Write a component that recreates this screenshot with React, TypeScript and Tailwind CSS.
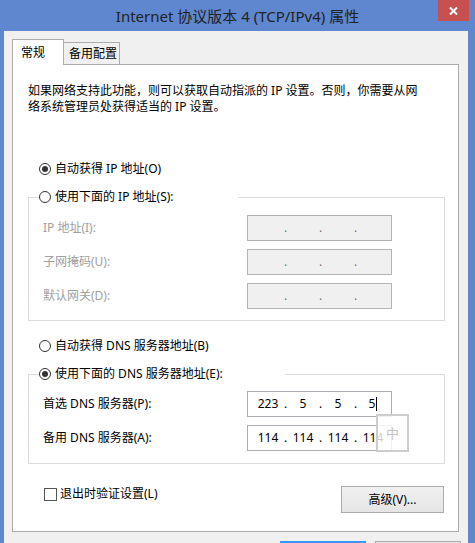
import { Fragment } from "react";

const FONT = "font-['Noto_Sans','Noto_Sans_CJK_SC',sans-serif]";

function Radio({ checked }: { checked?: boolean }) {
  return (
    <span className="flex h-[12px] w-[12px] shrink-0 items-center justify-center rounded-full border border-[#333] bg-white">
      {checked && <span className="h-[6px] w-[6px] rounded-full bg-[#333]" />}
    </span>
  );
}

function RadioRow({ label, checked }: { label: string; checked?: boolean }) {
  return (
    <div className="flex h-[16px] items-center gap-[4px] whitespace-nowrap">
      <Radio checked={checked} />
      <span>{label}</span>
    </div>
  );
}

function IpField({ values, disabled, caret }: { values: string[]; disabled?: boolean; caret?: boolean }) {
  return (
    <div
      className={
        "flex h-[26px] w-[145px] shrink-0 items-center border pl-[6px] " +
        (disabled ? "border-[#b4b4b4] bg-[#f0f0f0] text-[#777]" : "border-[#abadb3] bg-white text-black")
      }
    >
      {values.map((v, i) => (
        <Fragment key={i}>
          {i > 0 && <span className="w-[7px] text-center">.</span>}
          <span className="flex w-[28px] items-center justify-center">
            {v}
            {caret && i === 3 && <span className="ml-[1px] h-[14px] w-[1px] bg-black" />}
          </span>
        </Fragment>
      ))}
    </div>
  );
}

function FieldRow({ label, values, disabled, caret }: { label: string; values: string[]; disabled?: boolean; caret?: boolean }) {
  return (
    <div className="flex h-[26px] items-center">
      <span className={"w-[204px] whitespace-nowrap " + (disabled ? "text-[#a0a0a0]" : "text-black")}>{label}</span>
      <IpField values={values} disabled={disabled} caret={caret} />
    </div>
  );
}

const EMPTY = ["", "", "", ""];

export default function App() {
  return (
    <div className={`relative h-[543px] w-[475px] overflow-hidden bg-[#5e87d0] text-[12px] leading-[16px] text-black ${FONT}`}>
      {/* title bar */}
      <div className="relative flex h-[31px] items-center justify-center">
        <span className="text-[15px] text-[#222]">Internet 协议版本 4 (TCP/IPv4) 属性</span>
        <button className="absolute right-[6px] top-0 flex h-[21px] w-[31px] items-center justify-center bg-[#c75050]">
          <svg width="9" height="8" viewBox="0 0 9 8">
            <path d="M1 0.5 L8 7.5 M8 0.5 L1 7.5" stroke="white" strokeWidth="2" />
          </svg>
        </button>
      </div>

      {/* client area */}
      <div className="ml-[4px] mr-[7px] h-[512px] bg-[#f0f0f0] pl-[8px] pr-[9px] pt-[8px]">
        <div className="relative z-10 -mb-px flex h-[26px] items-end">
          <div className="h-[26px] w-[52px] border-l border-r border-t border-[#acacac] bg-white pl-[8px] pt-[5px]">常规</div>
          <div className="-ml-px h-[23px] w-[57px] border border-[#acacac] bg-[#f0f0f0] pl-[5px] pt-[3px]">备用配置</div>
        </div>

        <div className="h-[468px] border border-[#acacac] bg-white pl-[15px] pr-[13px] pt-[18px]">
          <p className="whitespace-nowrap leading-[16px]">
            如果网络支持此功能，则可以获取自动指派的 IP 设置。否则，你需要从网
            <br />
            络系统管理员处获得适当的 IP 设置。
          </p>

          <div className="ml-[11px] mt-[46px]">
            <RadioRow label="自动获得 IP 地址(O)" checked />
          </div>

          <fieldset className="mt-[12px] border border-[#dcdcdc] pb-[11px] pl-[14px]">
            <legend className="-ml-[4px] w-[199px] bg-white">
              <RadioRow label="使用下面的 IP 地址(S):" />
            </legend>
            <div className="mt-[10px] flex flex-col gap-[8px]">
              <FieldRow label="IP 地址(I):" values={EMPTY} disabled />
              <FieldRow label="子网掩码(U):" values={EMPTY} disabled />
              <FieldRow label="默认网关(D):" values={EMPTY} disabled />
            </div>
          </fieldset>

          <div className="ml-[11px] mt-[17px]">
            <RadioRow label="自动获得 DNS 服务器地址(B)" />
          </div>

          <fieldset className="mt-[12px] border border-[#dcdcdc] pb-[12px] pl-[14px]">
            <legend className="-ml-[4px] w-[246px] bg-white">
              <RadioRow label="使用下面的 DNS 服务器地址(E):" checked />
            </legend>
            <div className="mt-[9px] flex flex-col gap-[8px]">
              <FieldRow label="首选 DNS 服务器(P):" values={["223", "5", "5", "5"]} caret />
              <FieldRow label="备用 DNS 服务器(A):" values={["114", "114", "114", "114"]} />
            </div>
          </fieldset>

          <div className="mt-[22px] flex items-start justify-between">
            <label className="ml-[16px] flex h-[16px] items-center gap-[3px] whitespace-nowrap">
              <span className="h-[13px] w-[13px] border border-[#555] bg-white" />
              <span>退出时验证设置(L)</span>
            </label>
            <button className="mr-[1px] h-[27px] w-[103px] border border-[#acacac] bg-gradient-to-b from-[#f0f0f0] to-[#e5e5e5] text-black">
              高级(V)...
            </button>
          </div>
        </div>

        {/* OK / Cancel buttons, only their top edge is in view */}
        <div className="mt-[9px] flex gap-[9px] pl-[268px]">
          <div className="h-[27px] w-[86px] shrink-0 border-2 border-[#3399ff] bg-[#e5f1fb]" />
          <div className="h-[27px] w-[86px] shrink-0 border border-[#acacac] bg-[#e5e5e5]" />
        </div>
      </div>

      {/* IME indicator */}
      <div className="absolute left-[376px] top-[414px] flex h-[38px] w-[33px] items-center justify-center border-2 border-[#cdcdcd] bg-white/80 text-[13px] text-[#c4c4c4]">
        中
      </div>
    </div>
  );
}
